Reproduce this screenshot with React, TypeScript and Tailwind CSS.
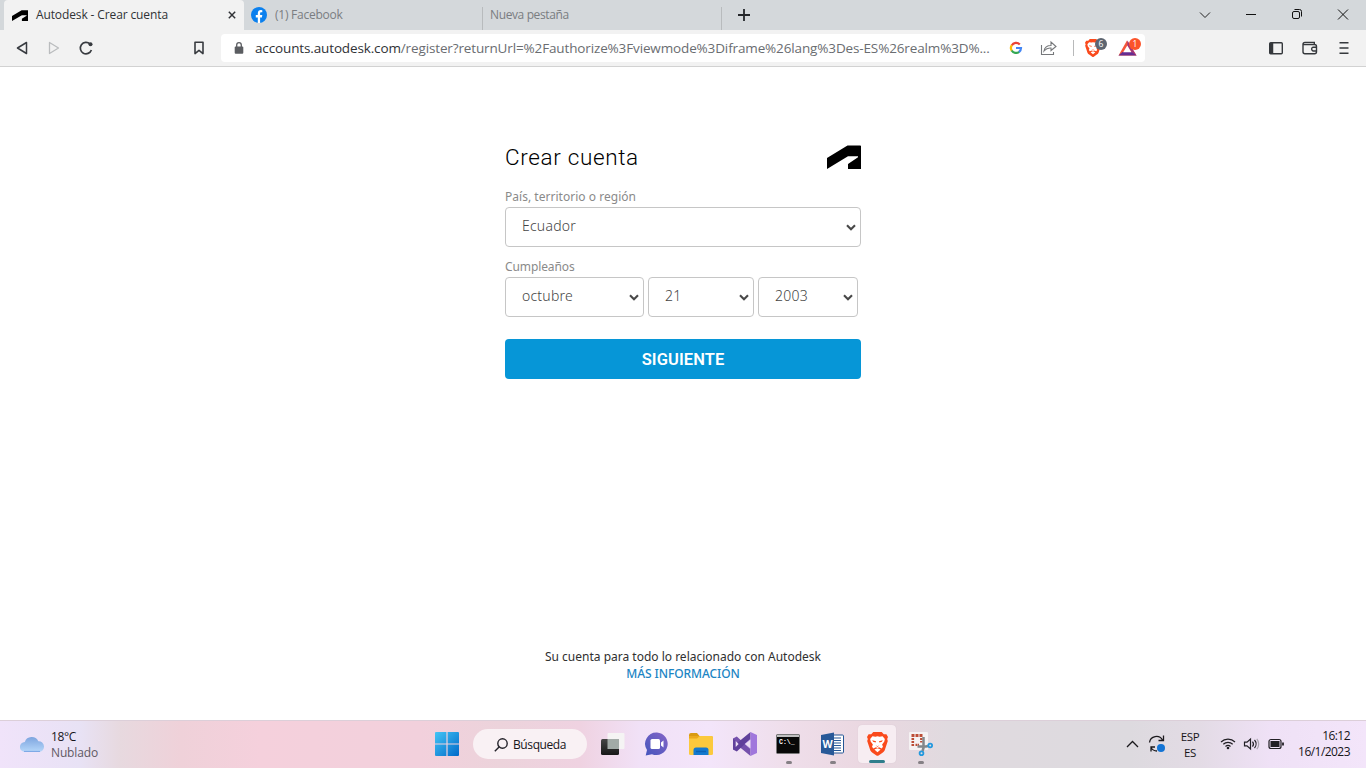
import React from 'react';

function AutodeskMark({ className }: { className: string }) {
  return (
    <svg viewBox="0 0 34 24" className={className} preserveAspectRatio="none">
      <path d="M0 24V13L20.5 0.5H33.2C33.8 .5 34 .8 34 1.3V24H21V19L31 12.3V11.2H21Z" fill="#000" />
    </svg>
  );
}

function Facebook() {
  return (
    <svg viewBox="0 0 16 16" className="h-4 w-4 shrink-0">
      <circle cx="8" cy="8" r="8" fill="#0b80ee" />
      <path d="M6.8 16V10.4H4.8V8H6.8V6.4C6.8 4.3 8 3.1 9.9 3.1L11.3 3.2V5.2H10.3C9.4 5.2 9.1 5.7 9.1 6.4V8H11.3L10.9 10.4H9.1V16Z" fill="#fff" />
    </svg>
  );
}

function BraveLion({ className }: { className: string }) {
  return (
    <svg viewBox="0 0 20 24" className={className} preserveAspectRatio="none">
      <path d="M6 0H14L16 2.3L18.5 2.2L20 5L19.2 7L19.8 9L16.8 18.5Q16 20 14.8 20.7L11 23.5Q10 24.2 9 23.5L5.2 20.7Q4 20 3.2 18.5L.2 9L.8 7L0 5L1.5 2.2L4 2.3Z" fill="#fa4a1c" />
      <path d="M5.2 4.2L8 4.8L10 4.3L12 4.8L14.8 4.2L17 7L16.5 9.5L14.4 12.5L15.2 14.8L14 16.4L11.5 15.2L10 16L8.5 15.2L6 16.4L4.8 14.8L5.6 12.5L3.5 9.5L3 7Z" fill="#fff" />
      <path d="M5 8.2L8.6 9.2L8.2 10.4L5.8 9.8ZM15 8.2L11.4 9.2L11.8 10.4L14.2 9.8ZM8.2 13.2L10 14.3L11.8 13.2L10 15Z" fill="#fa4a1c" />
      <path d="M7 17.6L10 16.2L13 17.6L10 20.2Z" fill="#fff" />
    </svg>
  );
}

function TabStrip() {
  return (
    <div className="flex h-[30px] bg-[#d4d8db] pl-1 text-[12px]">
      <div className="flex w-[240px] items-center rounded-t-[4px] bg-[#f2f2f2] pl-2">
        <AutodeskMark className="h-[11px] w-4" />
        <span className="ml-2 w-[192px] whitespace-nowrap tracking-[-0.12px] text-[#303236]">Autodesk - Crear cuenta</span>
        <svg viewBox="0 0 10 10" className="h-2 w-2" stroke="#303236" strokeWidth="1.8"><path d="M1 1L9 9M9 1L1 9" /></svg>
      </div>
      <div className="flex w-[238px] items-center pl-[7px] text-[#7a7d81]">
        <Facebook />
        <span className="ml-2 tracking-[-0.25px]">(1) Facebook</span>
      </div>
      <div className="mt-[7px] flex h-[23px] w-[240px] items-center border-x border-[#b8bbbd] pb-[7px] pl-[7px] tracking-[-0.38px] text-[#7a7d81]">
        Nueva pestaña
      </div>
      <div className="flex w-[44px] items-center justify-center">
        <svg viewBox="0 0 12 12" className="h-3 w-3" stroke="#24262a" strokeWidth="1.8"><path d="M6 0V12M0 6H12" /></svg>
      </div>
      <div className="ml-auto flex items-center">
        <svg viewBox="0 0 46 28" className="h-7 w-[46px]" fill="none" stroke="#222"><path d="M18 11.5L23 16.5L28 11.5" /></svg>
        <svg viewBox="0 0 46 28" className="h-7 w-[46px]" stroke="#111"><path d="M18 13.5H28" /></svg>
        <svg viewBox="0 0 46 28" className="h-7 w-[46px]" fill="none" stroke="#111"><rect x="18.5" y="10.5" width="7" height="7" rx="1.5" /><path d="M20.5 8.5H25.5Q27.5 8.5 27.5 10.5V15.5" /></svg>
        <svg viewBox="0 0 46 28" className="h-7 w-[46px]" stroke="#111"><path d="M18 8.5L28 18.5M28 8.5L18 18.5" /></svg>
      </div>
    </div>
  );
}

function Toolbar() {
  return (
    <div className="flex h-[37px] items-center border-b border-[#d2d2d2] bg-[#f2f2f2]">
      <svg viewBox="0 0 221 36" className="h-9 w-[221px] shrink-0" fill="none" strokeLinejoin="round">
        <path d="M26.5 12.5L17.5 18L26.5 23.5Z" stroke="#383b40" strokeWidth="1.5" />
        <path d="M49.5 12.5L58.5 18L49.5 23.5Z" stroke="#babcbe" strokeWidth="1.3" />
        <path d="M90 14A5.7 5.7 0 1 0 91.4 20" stroke="#383b40" strokeWidth="1.7" />
        <circle cx="90.5" cy="14.3" r="2" fill="#383b40" />
        <path d="M195 12.2H203V23.6L199 20.3L195 23.6Z" stroke="#383b40" strokeWidth="1.6" />
      </svg>
      <div className="flex h-[28px] w-[924px] shrink-0 items-center rounded-[4px] bg-white pl-[13px]">
        <svg viewBox="0 0 10 12" className="h-3 w-[10px]"><rect y="4.5" x=".7" width="8.6" height="7.2" rx="1" fill="#5b5d61" /><path d="M2.7 5V3A2.3 2.3 0 0 1 7.3 3V5" fill="none" stroke="#5b5d61" strokeWidth="1.3" /></svg>
        <span className="ml-[11px] w-[738px] shrink-0 whitespace-nowrap text-[13.5px] tracking-[-0.135px] text-[#6a6d71]"><span className="text-[#303236]">accounts.autodesk.com</span>/register?returnUrl=%2Fauthorize%3Fviewmode%3Diframe%26lang%3Des-ES%26realm%3D%...</span>
        <svg viewBox="0 0 152 28" className="h-7 w-[152px] shrink-0" fill="none">
          <g strokeWidth="2.2">
            <path d="M26.8 10.5A5 5 0 0 0 18.7 11.5" stroke="#ea4335" />
            <path d="M18.8 11.2A5 5 0 0 0 18.8 16.8" stroke="#fbbc05" />
            <path d="M18.7 16.5A5 5 0 0 0 26.2 17.8" stroke="#34a853" />
            <path d="M26 18A5 5 0 0 0 28 14H23" stroke="#4285f4" />
          </g>
          <path d="M48.5 11V20.5H60.5V18M51 17Q52 11.5 58 11.5V8L63 12.5L58 16.5V14Q54 13.5 51 17Z" stroke="#76787b" strokeWidth="1.1" />
          <path d="M80.5 6V22" stroke="#b8b9ba" />
          <path d="M134 6.5L143.5 21.5H125.5Z" fill="#f4573a" />
          <path d="M125.5 21.5L129.5 18H140L143.5 21.5Z" fill="#662d91" />
          <path d="M134.5 6.5L143.5 21.5L138.5 18L134.3 12Z" fill="#a33679" />
          <path d="M134.3 11.5L130.2 18.3H138.4Z" fill="#fff" />
          <foreignObject x="92" y="5" width="18" height="18"><BraveLion className="h-[18px] w-4" /></foreignObject>
          <circle cx="108" cy="10" r="6" fill="#5d6570" />
          <circle cx="142" cy="10" r="6" fill="#fb542b" />
          <text x="108" y="13" fontSize="8.5" textAnchor="middle" fill="#fff">6</text>
          <text x="142" y="13" fontSize="8.5" textAnchor="middle" fill="#fff">1</text>
        </svg>
      </div>
      <svg viewBox="0 0 110 36" className="ml-auto h-9 w-[110px] shrink-0" fill="none" stroke="#35383c" strokeWidth="1.4">
        <rect x="13.7" y="12.7" width="12.6" height="11" rx="1" /><path d="M15.5 13V23.5" strokeWidth="3.5" />
        <path d="M47.5 14.5H58.5Q60.5 14.5 60.5 16.5V21.7Q60.5 23.7 58.5 23.7H49Q47 23.7 47 21.7V14.2Q47 12.4 49 12.4H58.3V14.5M60.5 17.2H57A2 2 0 0 0 57 21H60.5" />
        <path d="M83.5 12.8H92.5M83.5 18H92.5M83.5 23.2H92.5" strokeWidth="1.5" />
      </svg>
    </div>
  );
}

function SelectBox({ value, label, className }: { value: string; label: string; className: string }) {
  return (
    <div className={`relative h-10 ${className}`}>
      <select aria-label={label} defaultValue={value} className="h-full w-full appearance-none rounded-[4px] border border-[#c6c6c6] bg-white pb-[4px] pl-4 font-['Noto_Sans',sans-serif] text-[14px] font-light tracking-[0.22px] text-[#444]">
        <option value={value}>{value}</option>
      </select>
      <svg viewBox="0 0 10 7" className="pointer-events-none absolute right-[5px] top-[17px] h-[7px] w-[10px]" fill="none" stroke="#484848" strokeWidth="2.1"><path d="M1 1.2L5 5.2L9 1.2" /></svg>
    </div>
  );
}

function Register() {
  return (
    <main className="flex flex-1 flex-col items-center bg-white">
      <div className="mt-[76px] w-[356px] font-['Noto_Sans',sans-serif]">
        <div className="flex h-[27px] items-center justify-between">
          <h1 className="font-['Roboto',sans-serif] text-[22.5px] font-light leading-[26px] tracking-[0.65px] text-black">Crear cuenta</h1>
          <AutodeskMark className="h-6 w-[34px]" />
        </div>
        <div className="mt-[19px] h-[18px] text-[12px] leading-[16px] tracking-[0.03px] text-[#8a8a8a]">País, territorio o región</div>
        <SelectBox value="Ecuador" label="País" className="w-full" />
        <div className="mt-3 h-[18px] text-[12px] leading-[16px] tracking-[-0.1px] text-[#8a8a8a]">Cumpleaños</div>
        <div className="flex gap-1">
          <SelectBox value="octubre" label="Mes" className="w-[139px]" />
          <SelectBox value="21" label="Día" className="w-[106px]" />
          <SelectBox value="2003" label="Año" className="w-[100px]" />
        </div>
        <button className="mt-[22px] flex h-10 w-full items-center justify-center rounded-[4px] bg-[#0696d7] pt-[3px] font-['Roboto',sans-serif] text-[16.5px] font-semibold tracking-[0.1px] text-white">SIGUIENTE</button>
      </div>
      <footer className="mt-auto mb-[38px] text-center font-['Noto_Sans',sans-serif] text-[12px] leading-[17px] text-[#303030]">
        <div>Su cuenta para todo lo relacionado con Autodesk</div>
        <div className="font-medium tracking-[-0.08px] text-[#1c85c4]">MÁS INFORMACIÓN</div>
      </footer>
    </main>
  );
}

function Cell({ children, dot = false }: { children: React.ReactNode; dot?: boolean }) {
  return (
    <div className="relative flex h-[47px] w-11 shrink-0 items-center justify-center pb-[2px]">
      {children}
      {dot && <span className="absolute bottom-[4px] h-[3px] w-[6px] rounded-full bg-[#858085]" />}
    </div>
  );
}

function Taskbar() {
  return (
    <div className="flex h-12 border-t border-[#dccfd9] bg-[linear-gradient(90deg,#f0e3fa_0px,#e8e2f5_80px,#e7d9df_120px,#efd1d9_180px,#f5d0dc_260px,#f2d0dc_420px,#ecd3db_500px,#efd2e1_580px,#f1e1f7_640px,#f3e5fa_710px,#efdeea_790px,#ead7e0_870px,#e0dadf_950px,#dddadf_1130px,#e3dbe5_1200px,#efe1f6_1270px,#f3e5fa_1366px)] text-[12px] text-[#17151a]">
      <div className="flex w-[424px] items-center pl-5">
        <svg viewBox="0 0 24 16" className="mb-[2px] h-4 w-6"><defs><linearGradient id="cl" x2="0" y2="1"><stop stopColor="#7ea5df" /><stop offset="1" stopColor="#b6d7fa" /></linearGradient></defs><path d="M5 16A5 5 0 0 1 4.8 6A7.3 7.3 0 0 1 18.3 5.3A5.3 5.3 0 0 1 19 16Z" fill="url(#cl)" /><path d="M4 15.4H20" stroke="#78a5e3" /></svg>
        <div className="ml-[7px] leading-4"><div className="tracking-[-0.4px]">18°C</div><div className="tracking-[-0.15px] text-[#615963]">Nublado</div></div>
      </div>
      <Cell>
        <svg viewBox="0 0 24 24" className="ml-[2px] h-6 w-6"><defs><linearGradient id="win" x2="1" y2="1"><stop stopColor="#43c5f5" /><stop offset="1" stopColor="#0069c9" /></linearGradient></defs><path d="M0 1Q0 0 1 0H11.4V11.4H0ZM12.6 0H23Q24 0 24 1V11.4H12.6ZM0 12.6H11.4V24H1Q0 24 0 23ZM12.6 12.6H24V23Q24 24 23 24H12.6Z" fill="url(#win)" /></svg>
      </Cell>
      <div className="ml-[5px] mr-1 mt-2 flex h-[30px] w-[114px] shrink-0 items-center rounded-full bg-[#f9f1f4] pl-[21px] pt-[2px]">
        <svg viewBox="0 0 14 14" className="h-[14px] w-[14px]" fill="none" stroke="#25232a" strokeWidth="1.4"><circle cx="8.5" cy="5.5" r="4.7" /><path d="M5.3 8.8L.8 13.3" /></svg>
        <span className="ml-[5px] tracking-[-0.4px]">Búsqueda</span>
      </div>
      <Cell>
        <svg viewBox="0 0 24 24" className="h-6 w-6"><defs><linearGradient id="tv" x2="0" y2="1"><stop stopColor="#454545" /><stop offset="1" stopColor="#171717" /></linearGradient></defs><rect x="6.5" y="1" width="17" height="16" rx="1" fill="#f5f4f4" /><rect x="0" y="7" width="18" height="16" rx="1.5" fill="url(#tv)" /><path d="M6.5 7H18V17H6.5Z" fill="#a2aaa7" /></svg>
      </Cell>
      <Cell>
        <svg viewBox="0 0 24 24" className="h-6 w-6"><defs><linearGradient id="ch" x1="1" x2="0" y2="1"><stop stopColor="#8565c7" /><stop offset="1" stopColor="#4556bd" /></linearGradient></defs><path d="M12 .5A11.3 11.3 0 1 1 7 22.2L.7 23.4L2 18A11.3 11.3 0 0 1 12 .5Z" fill="url(#ch)" /><rect x="5.5" y="7" width="9.5" height="10" rx="1.5" fill="#fff" /><path d="M16 10.5L18.5 8.5V15.5L16 13.5Z" fill="#fff" /></svg>
      </Cell>
      <Cell>
        <svg viewBox="0 0 24 24" className="h-6 w-6"><path d="M0 3Q0 1 2 1H8L10.5 4H22Q24 4 24 6V9H0Z" fill="#d99b12" /><rect y="4" width="24" height="19" rx="1.5" fill="#fbc93d" /><path d="M0 6.5H8L11 4H1.5Q0 4 0 5.5Z" fill="#ebaa1c" /><path d="M4.5 23V18Q4.5 15.5 7 15.5H17Q19.5 15.5 19.5 18V23Z" fill="#1479ce" /><path d="M7 19.5H17" stroke="#0b62b4" strokeWidth="1.5" /></svg>
      </Cell>
      <Cell>
        <svg viewBox="0 0 24 24" className="h-6 w-6">
          <path d="M0 6.5L3.8 4.6L17.5 17V24L3.8 12.8L3 14.5V16.5L0 17.5Z" fill="#7551ac" />
          <path d="M0 17.5L3.8 19.4L17.5 7V0L3.8 11.2L3 9.5L0 6.5Z" fill="#60409b" />
          <path d="M2.7 9L5.6 12L2.7 15Z" fill="#ecdff2" />
          <path d="M17.5 0L24 3V21L17.5 24V17L11.5 12L17.5 7Z" fill="#a077dc" />
          <path d="M17.5 7.5V16.5L12 12Z" fill="#ecdff2" />
        </svg>
      </Cell>
      <Cell dot>
        <svg viewBox="0 0 24 20" className="mr-[2px] h-5 w-6"><rect x=".5" y=".5" width="23" height="19" rx="1" fill="#080808" stroke="#777" /><path d="M1 2H23" stroke="#c0c0c0" strokeWidth="2" /><text x="3" y="9.5" fontSize="6.5" fontFamily="Liberation Mono" fontWeight="bold" fill="#fff">C:\_</text></svg>
      </Cell>
      <Cell dot>
        <svg viewBox="0 0 24 24" className="mr-[2px] h-6 w-6"><path d="M12 3H22.5Q23.5 3 23.5 4V20Q23.5 21 22.5 21H12Z" fill="#fff" stroke="#245795" /><path d="M14 6H21M14 8.5H21M14 11H21M14 13.5H21M14 16H21M14 18.5H21" stroke="#285998" strokeWidth="1.2" /><path d="M1 3L14 .5V23.5L1 21Z" fill="#285998" /><text x="7.6" y="16" fontSize="10.5" fontWeight="bold" textAnchor="middle" fill="#fff">W</text></svg>
      </Cell>
      <div className="flex w-11 shrink-0 justify-center pt-[4px]">
        <div className="relative flex h-[38px] w-[38px] justify-center rounded-[4px] bg-[#f7edf2] pt-[7px] shadow-[0_0_1px_#cdbfca]">
          <BraveLion className="h-[24px] w-[21px]" />
          <span className="absolute bottom-0 h-[3px] w-4 rounded-full bg-[#2f7e8c]" />
        </div>
      </div>
      <Cell dot>
        <svg viewBox="0 0 24 24" className="h-6 w-6" fill="none"><rect x="0" y="0" width="19" height="18" rx="1" fill="#f5f2f3" /><path d="M2.5 3.5H13.5" stroke="#bc4d36" strokeWidth="3" strokeDasharray="3 1" /><path d="M3.8 6V14" stroke="#bc4d36" strokeWidth="2.6" strokeDasharray="2 1" /><path d="M12.3 6V10.5" stroke="#bc4d36" strokeWidth="2.4" strokeDasharray="2 1" /><path d="M6.5 12.8H10" stroke="#bc4d36" strokeWidth="2.2" strokeDasharray="1.5 .5" /><path d="M14.5 5V16L13.5 19M8.5 14.5H17L19 14" stroke="#84878b" strokeWidth="2.5" /><circle cx="12.5" cy="21.2" r="1.9" stroke="#2499de" strokeWidth="1.8" /><circle cx="21.2" cy="13.5" r="1.9" stroke="#2499de" strokeWidth="1.8" /></svg>
      </Cell>
      <div className="ml-auto flex shrink-0 items-center pr-[16px]">
        <svg viewBox="0 0 50 30" className="mb-[2px] mr-[1px] h-[30px] w-[50px]" fill="none" stroke="#1b191d" strokeWidth="1.3"><path d="M7 18L12.5 12.5L18 18" /><path d="M29.5 13.5A7 7 0 0 1 42.5 11M43.5 6.5V11.5H38.5M31 22.5V18H35M31 18.5Q33 22 37 22" /><circle cx="41" cy="19" r="4" fill="#1374d5" stroke="none" /></svg>
        <div className="ml-[9px] w-[20px] text-center text-[11.5px] leading-4 tracking-[-0.3px]">ESP<br />ES</div>
        <svg viewBox="0 0 66 20" className="mb-[2px] ml-[20px] h-5 w-[66px]" fill="none" stroke="#211f24" strokeWidth="1.2"><path d="M1 8A10 10 0 0 1 15 8M3.3 10.3A6.7 6.7 0 0 1 12.7 10.3M5.5 12.5A3.6 3.6 0 0 1 10.5 12.5" /><circle cx="8" cy="14" r="1.3" fill="#211f24" stroke="none" /><path d="M24.5 8.2H27L30.5 5V15L27 11.8H24.5ZM32.5 7.5A4 4 0 0 1 32.5 12.5M34.5 6A6 6 0 0 1 34.5 14" /><path d="M36.8 4.8A8 8 0 0 1 36.8 15.2" stroke="#aaa4ad" /><rect x="49" y="5.5" width="12" height="9" rx="2" /><rect x="50.5" y="7" width="9" height="6" fill="#211f24" stroke="none" /><path d="M63 8.5V11.5" strokeWidth="1.8" /></svg>
        <div className="w-[64px] whitespace-nowrap pb-[2px] text-right text-[12px] leading-4 tracking-[-0.55px]">16:12<br />16/1/2023</div>
      </div>
    </div>
  );
}

export default function App() {
  return (
    <div className="flex h-screen w-full flex-col overflow-hidden bg-white font-['Open_Sans','Noto_Sans',sans-serif]">
      <TabStrip />
      <Toolbar />
      <Register />
      <Taskbar />
    </div>
  );
}
